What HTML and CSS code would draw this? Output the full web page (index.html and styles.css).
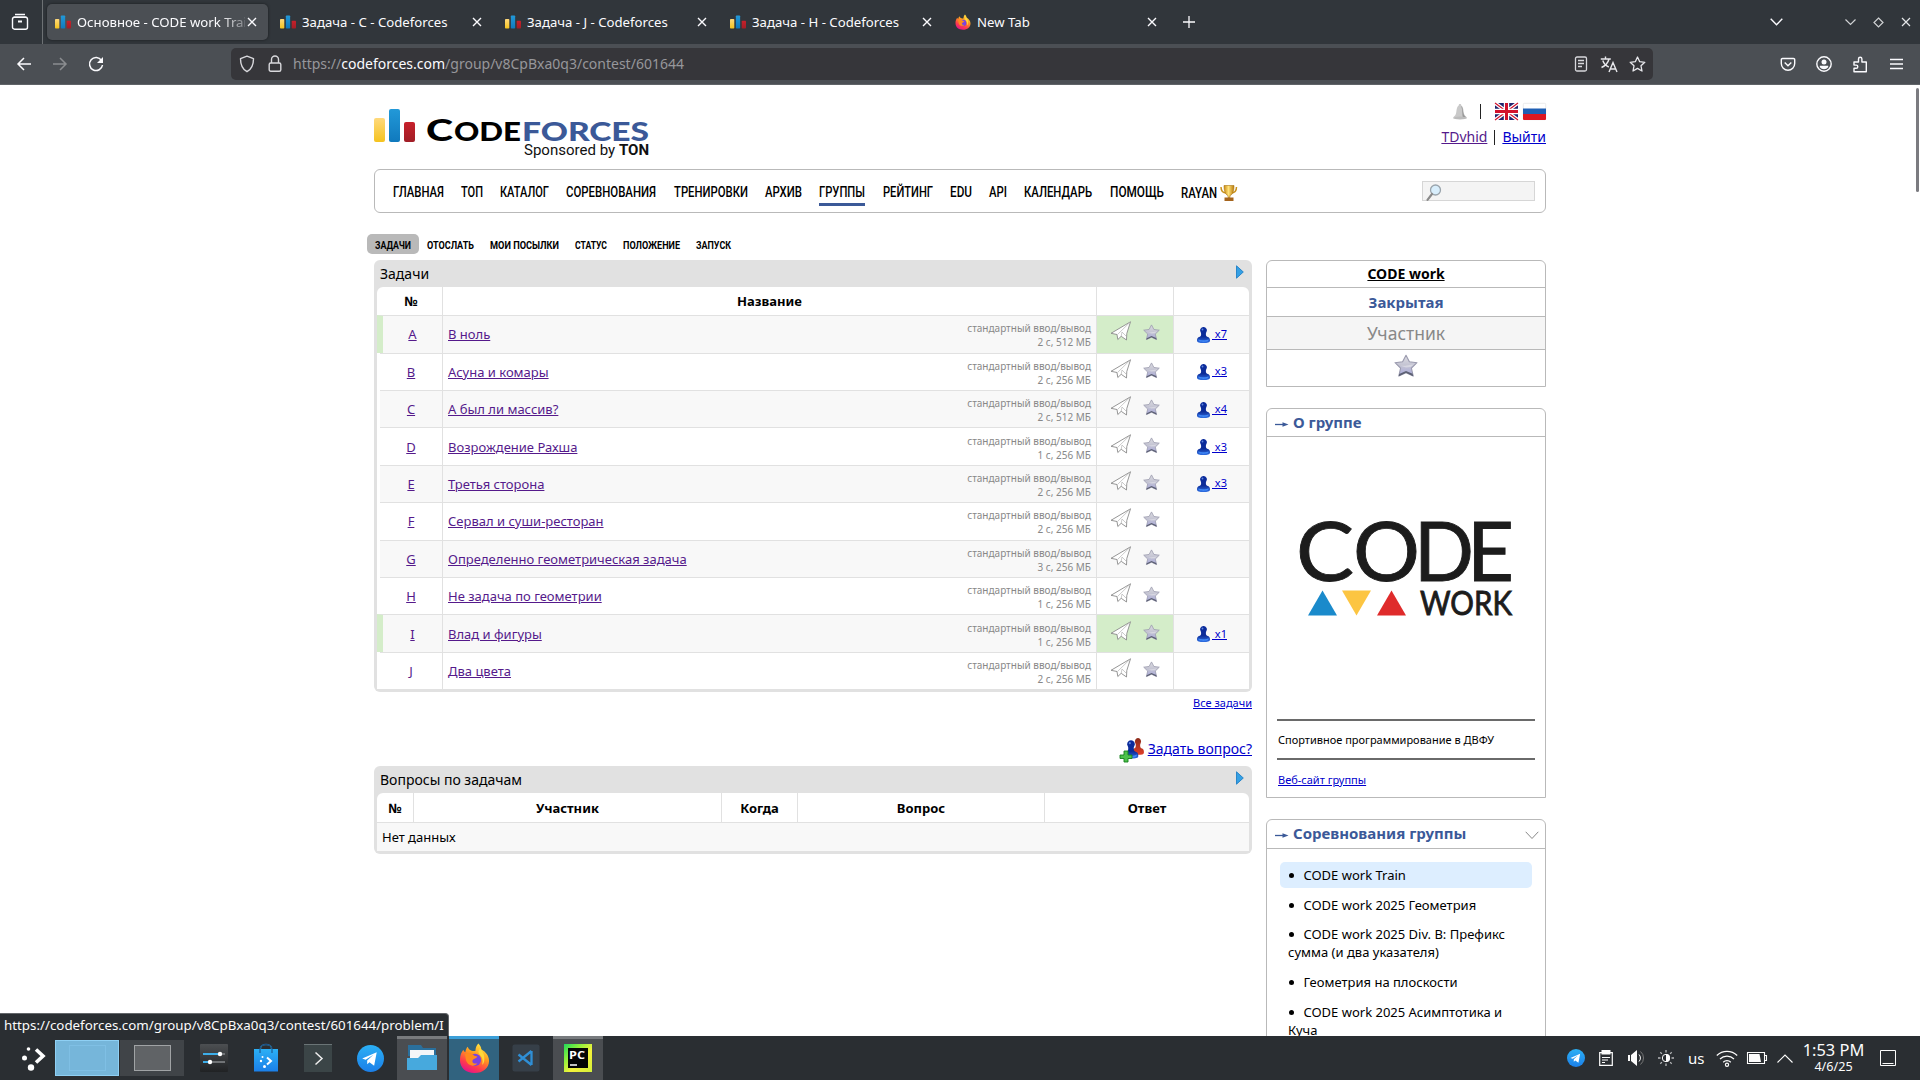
FILE: index.html
```html
<!DOCTYPE html>
<html lang="ru">
<head>
<meta charset="utf-8">
<title>Основное - CODE work Train - Codeforces</title>
<link rel="stylesheet" href="styles.css">
</head>
<body>
<svg class="defs" width="0" height="0" aria-hidden="true">
  <defs>
    <linearGradient id="g-yellow" x1="0" y1="0" x2="0" y2="1"><stop offset="0" stop-color="#ffd97c"/><stop offset="1" stop-color="#f5c31e"/></linearGradient>
    <linearGradient id="g-blue" x1="0" y1="0" x2="0" y2="1"><stop offset="0" stop-color="#2299d8"/><stop offset="1" stop-color="#1079bd"/></linearGradient>
    <linearGradient id="g-red" x1="0" y1="0" x2="0" y2="1"><stop offset="0" stop-color="#c8202b"/><stop offset="1" stop-color="#a01e26"/></linearGradient>
    <linearGradient id="g-star" x1="0" y1="0" x2="0" y2="1"><stop offset="0" stop-color="#dcdce2"/><stop offset=".5" stop-color="#c3c3d2"/><stop offset="1" stop-color="#a8a8dc"/></linearGradient>
    <linearGradient id="g-pawn" x1="0" y1="0" x2="0" y2="1"><stop offset="0" stop-color="#0a2a9c"/><stop offset=".6" stop-color="#0c2c98"/><stop offset="1" stop-color="#2f6fe2"/></linearGradient>
    <linearGradient id="g-pawn-red" x1="0" y1="0" x2="0" y2="1"><stop offset="0" stop-color="#8a2a18"/><stop offset="1" stop-color="#e0402a"/></linearGradient>
    <linearGradient id="g-fox" x1=".8" y1="0" x2=".3" y2="1"><stop offset="0" stop-color="#fff24a"/><stop offset=".4" stop-color="#ff9a1f"/><stop offset=".75" stop-color="#ff3a4c"/><stop offset="1" stop-color="#e3128c"/></linearGradient>
    <linearGradient id="g-tg" x1="0" y1="0" x2="0" y2="1"><stop offset="0" stop-color="#2bb0f5"/><stop offset="1" stop-color="#1b7fe8"/></linearGradient>
    <linearGradient id="g-dark" x1="0" y1="0" x2="0" y2="1"><stop offset="0" stop-color="#4c4f52"/><stop offset="1" stop-color="#202224"/></linearGradient>
    <linearGradient id="g-cup" x1="0" y1="0" x2="1" y2="0"><stop offset="0" stop-color="#c98a12"/><stop offset=".45" stop-color="#ffe27a"/><stop offset="1" stop-color="#b87808"/></linearGradient>
    <linearGradient id="g-pc" x1="0" y1="0" x2="1" y2="1"><stop offset="0" stop-color="#1fd95b"/><stop offset=".3" stop-color="#8bf03c"/><stop offset=".6" stop-color="#f5f23a"/><stop offset="1" stop-color="#d4f03a"/></linearGradient>
  </defs>
  <symbol id="bars" viewBox="0 0 41 33">
    <rect x="0" y="9" width="11" height="24" rx="2" fill="url(#g-yellow)"/>
    <rect x="15" y="0" width="11" height="33" rx="2" fill="url(#g-blue)"/>
    <rect x="30" y="13" width="11" height="20" rx="2" fill="url(#g-red)"/>
  </symbol>
  <symbol id="close" viewBox="0 0 10 10"><path d="M1 1l8 8M9 1l-8 8" fill="none" stroke="currentColor" stroke-width="1.4"/></symbol>
  <symbol id="firefox" viewBox="0 0 32 32">
    <path d="M20 1c2 2 3 4 3 6 5 3 8 7 8 12 0 7-6 12.500-15 12.500S1 26 1 18c0-5 1.500-8 3.500-10.500C5 9 5.500 9.500 6.500 10 7 7 8 5.500 9 4.500c.5 2 2 3.500 4 4 2 .5 3 .5 4 0 0-3 1-5.500 3-7.500z" fill="url(#g-fox)"/>
    <circle cx="16.500" cy="18" r="6.300" fill="#7a42e0"/>
    <path d="M6 12c4-2 7-1 9 1 1 1.200 2.500 1.300 4 1.500-1 2.500-4 2-5 4-1 2.200 2 4 5 3-2 3-8 3.500-10.500-.5C6.500 18 7 14 6 12z" fill="#ff8a1e"/>
    <path d="M22 6c3 4 5 8 4 13-.3 2-1 3-2 4 1-5 0-8-3-11-1.500-1.500-1-4 1-6z" fill="#ffd83a"/>
  </symbol>
  <symbol id="telegram" viewBox="0 0 26 26"><circle cx="13" cy="13" r="13" fill="url(#g-tg)"/><path d="M5 13l14-6-2.500 13-4.500-3.500-2.200 2v-3.600l6-5.400-7.500 4.600z" fill="#fff"/></symbol>
  <symbol id="star" viewBox="0 0 24 24"><path d="M12 1.300l3.400 6.400 7.600 1-5.600 5.500 1.800 7.800-7.200-3.300L4.800 22l1.800-7.800L1 8.700l7.600-1z" fill="url(#g-star)" stroke="#9a9aae" stroke-width="1.100" stroke-linejoin="round"/><path d="M4.800 22.300l7.200-3.500 7.200 3.500-.6-2.600-6.600-2.700-6.800 3z" fill="#5c6072"/><path d="M4 11c5 2 10 0 16-.5L16.500 13 12 13.500z" fill="#fff" opacity=".35"/></symbol>
  <symbol id="plane" viewBox="0 0 22 20"><path d="M20.500.8L1 12.300l6 1.200.8 5 3.400-3.200 5.300 3.700.3-6.500z" fill="#fff" stroke="#8a8a8a" stroke-width=".9" stroke-linejoin="round"/><path d="M20.500.8L7.500 13.500M12 11l-.8 4.300M12 11l4 4" fill="none" stroke="#b5b5b5" stroke-width=".7"/></symbol>
  <symbol id="pawn" viewBox="0 0 13 16"><path d="M6.500 0a3.300 3.300 0 0 1 2.900 5C8.800 6 8.800 7 9 8.300c.1.800.6 1.400 2 1.800 1.300.5 2 1.500 2 3.600 0 1.700-2.500 2.300-6.500 2.300S0 15.400 0 13.700c0-2.100.7-3.100 2-3.600 1.400-.4 1.900-1 2-1.800.2-1.300.2-2.300-.4-3.300A3.300 3.300 0 0 1 6.500 0z" fill="url(#g-pawn)"/><path d="M1.500 12.300c2 1.400 8 1.400 10 0 .5 2-1.200 2.600-5 2.600s-5.500-.6-5-2.600z" fill="#3f86f5"/><circle cx="5.500" cy="2.500" r=".9" fill="#5f85dc"/></symbol>
  <symbol id="tri" viewBox="0 0 8 14"><path d="M.5.8L7.300 7 .5 13.200z" fill="#35a0e4" stroke="#1f7fc6" stroke-width=".9"/></symbol>
  <symbol id="arrow" viewBox="0 0 14 7"><path d="M0 3.500h9" stroke="#3b5998" stroke-width="1.300"/><path d="M7.500 1.200l6 2.300-6 2.300z" fill="#3b5998"/></symbol>
</svg>

<header class="tabs">
  <div class="recent"><svg width="18" height="18" viewBox="0 0 18 18" fill="none" stroke="#fbfbfe" stroke-width="1.400"><path d="M4 1.500h10M2.500 4.200h13"/><rect x="1.500" y="4.200" width="15" height="12" rx="2"/><path d="M7 8.500h4" stroke-width="2"/></svg></div>
  <div class="tab active"><svg class="fav"><use href="#bars"/></svg><span class="ttl fade">Основное - CODE work Train</span><svg class="x"><use href="#close"/></svg></div>
  <div class="tab"><svg class="fav"><use href="#bars"/></svg><span class="ttl">Задача - C - Codeforces</span><svg class="x"><use href="#close"/></svg></div>
  <div class="tab"><svg class="fav"><use href="#bars"/></svg><span class="ttl">Задача - J - Codeforces</span><svg class="x"><use href="#close"/></svg></div>
  <div class="tab"><svg class="fav"><use href="#bars"/></svg><span class="ttl">Задача - H - Codeforces</span><svg class="x"><use href="#close"/></svg></div>
  <div class="tab"><svg class="fav"><use href="#firefox"/></svg><span class="ttl">New Tab</span><svg class="x"><use href="#close"/></svg></div>
  <svg class="plus" width="12" height="12" viewBox="0 0 12 12"><path d="M6 0v12M0 6h12" stroke="#fbfbfe" stroke-width="1.300"/></svg>
  <div class="wm">
    <svg width="13" height="8" viewBox="0 0 13 8"><path d="M.7.8l5.800 6 5.800-6" fill="none" stroke="#fbfbfe" stroke-width="1.400"/></svg>
    <svg class="m1" width="11" height="7" viewBox="0 0 11 7"><path d="M.5.5l5 5 5-5" fill="none" stroke="#d0d2d4" stroke-width="1.200"/></svg>
    <svg width="11" height="11" viewBox="0 0 11 11"><path d="M5.500 1l4.500 4.500-4.500 4.500L1 5.500z" fill="none" stroke="#d0d2d4" stroke-width="1.200"/></svg>
    <svg width="10" height="10" viewBox="0 0 10 10"><path d="M1 1l8 8M9 1l-8 8" stroke="#e4e6e8" stroke-width="1.200"/></svg>
  </div>
</header>

<nav class="toolbar">
  <div class="navbtns">
    <svg width="16" height="16" viewBox="0 0 16 16"><path d="M15 8H2M8 2L2 8l6 6" fill="none" stroke="#fbfbfe" stroke-width="1.500"/></svg>
    <svg width="16" height="16" viewBox="0 0 16 16"><path d="M1 8h13M8 2l6 6-6 6" fill="none" stroke="#8b8d90" stroke-width="1.500"/></svg>
    <svg width="16" height="16" viewBox="0 0 16 16"><path d="M13.500 4.500A6.500 6.500 0 1 0 14.500 9" fill="none" stroke="#fbfbfe" stroke-width="1.500"/><path d="M15 1v6H9z" fill="#fbfbfe"/></svg>
  </div>
  <div class="url">
    <svg width="16" height="18" viewBox="0 0 16 18"><path d="M8 1.200l6.500 2.500c0 6-2 10.500-6.500 13-4.500-2.500-6.500-7-6.500-13z" fill="none" stroke="#d8d8dc" stroke-width="1.400" stroke-linejoin="round"/></svg>
    <svg width="14" height="18" viewBox="0 0 14 18"><rect x="1.200" y="8" width="11.600" height="8.300" rx="1.500" fill="none" stroke="#d8d8dc" stroke-width="1.400"/><path d="M3.500 8V4.500a3.500 3.500 0 0 1 7 0V8" fill="none" stroke="#d8d8dc" stroke-width="1.400"/></svg>
    <span class="addr">https://<b>codeforces.com</b>/group/v8CpBxa0q3/contest/601644</span>
    <div class="acts">
    <svg width="16" height="16" viewBox="0 0 16 16" fill="none" stroke="#d8d8dc" stroke-width="1.300"><rect x="2.500" y="1" width="11" height="14" rx="1.500"/><path d="M5 4.500h6M5 7.500h6M5 10.500h4"/></svg>
    <svg width="18" height="17" viewBox="0 0 18 17" fill="none" stroke="#e8e8ec" stroke-width="1.400"><path d="M.8 3h10M5.500.5V3M9 3C8 7 5 10 1.500 11.500M2.800 4.500c1 3 3.500 5.500 6 6.500M9 16l4-9.500L17 16M10.300 13h5.400"/></svg>
    <svg width="17" height="16" viewBox="0 0 17 16"><path d="M8.500 1l2.200 4.700 5.100.6-3.800 3.500 1 5.200-4.500-2.600L4 15l1-5.200L1.200 6.300l5.100-.6z" fill="none" stroke="#e8e8ec" stroke-width="1.300" stroke-linejoin="round"/></svg>
    </div>
  </div>
  <div class="tools">
    <svg width="16" height="16" viewBox="0 0 16 16" fill="none" stroke="#fbfbfe" stroke-width="1.400"><path d="M2.500 2.500h11a1.200 1.200 0 0 1 1.200 1.200V7.500a6.700 6.700 0 0 1-13.400 0V3.700A1.200 1.200 0 0 1 2.500 2.500zM4.700 6.500L8 9.700l3.300-3.200"/></svg>
    <svg width="16" height="16" viewBox="0 0 16 16"><circle cx="8" cy="8" r="7.200" fill="none" stroke="#fbfbfe" stroke-width="1.400"/><circle cx="8" cy="6" r="2.500" fill="#fbfbfe"/><path d="M3.800 9.700h8.400v1.600a5.500 5.500 0 0 1-8.400 0z" fill="#fbfbfe"/></svg>
    <svg width="16" height="17" viewBox="0 0 16 17"><path d="M2 6h4.500V3a1.700 1.700 0 0 1 3.400 0v3h4.400v9.800H2v-3.500h2.200a1.600 1.600 0 0 0 0-3.200H2z" fill="none" stroke="#fbfbfe" stroke-width="1.400" stroke-linejoin="round"/></svg>
    <svg class="burger" width="13" height="12" viewBox="0 0 13 12"><path d="M0 1.500h13M0 6h13M0 10.500h13" stroke="#fbfbfe" stroke-width="1.300"/></svg>
  </div>
</nav>

<main class="page">
  <div class="wrap">
    <div class="head">
      <svg class="logo" width="280" height="52" viewBox="0 0 280 52">
        <use href="#bars" width="41" height="33"/>
        <text class="cf" y="32"><tspan x="52" font-size="31" textLength="27" lengthAdjust="spacingAndGlyphs">C</tspan><tspan x="80" font-size="26" textLength="67" lengthAdjust="spacingAndGlyphs">ODE</tspan><tspan x="148" font-size="26" fill="#3b5998" textLength="127" lengthAdjust="spacingAndGlyphs">FORCES</tspan></text>
        <text class="ton" x="150" y="46" textLength="125" lengthAdjust="spacingAndGlyphs">Sponsored by <tspan font-weight="700">TON</tspan></text>
      </svg>
      <div class="user">
        <div class="flags">
          <svg width="16" height="16" viewBox="0 0 16 16"><path d="M8 0c1 0 1.300.7 1.300 1.500C11 2.500 11.300 5 11.700 8c.3 2.500 1.300 4 3.300 5.500H1C3 12 4 10.500 4.300 8c.4-3 .7-5.500 2.400-6.500C6.700.7 7 0 8 0z" fill="#c9c9c9"/><path d="M9 2c1.500 2 1.200 8 1.800 11.500h3.700C12 12 11.500 10 11 7.500 10.800 5 10.500 2.500 9 2z" fill="#989898"/><ellipse cx="8" cy="14" rx="7" ry="1.500" fill="#bcbcbc"/></svg>
          <i class="sep"></i>
          <svg width="23" height="17" viewBox="0 0 23 17"><rect width="23" height="17" rx="1" fill="#20246c"/><path d="M0 0l23 17M23 0L0 17" stroke="#fff" stroke-width="3.600"/><path d="M0 0l23 17M23 0L0 17" stroke="#d2112b" stroke-width="1.200"/><path d="M11.500 0v17M0 8.500h23" stroke="#fff" stroke-width="5.400"/><path d="M11.500 0v17M0 8.500h23" stroke="#d2112b" stroke-width="3"/></svg>
          <svg width="23" height="17" viewBox="0 0 23 17"><rect x=".3" y=".3" width="22.400" height="16.400" rx="1" fill="#fff" stroke="#ddd" stroke-width=".6"/><path d="M0 5.500h23v6H0z" fill="#1f5fb4"/><path d="M0 11h23v5a1 1 0 0 1-1 1H1a1 1 0 0 1-1-1z" fill="#dc1722"/></svg>
        </div>
        <div class="login"><a class="v" href="#">TDvhid</a><i class="sep"></i><a href="#">Выйти</a></div>
      </div>
    </div>

    <nav class="menu">
      <svg width="51" height="36"><text y="23" textLength="51" lengthAdjust="spacingAndGlyphs">ГЛАВНАЯ</text></svg>
      <svg width="22" height="36"><text y="23" textLength="22" lengthAdjust="spacingAndGlyphs">ТОП</text></svg>
      <svg width="49" height="36"><text y="23" textLength="49" lengthAdjust="spacingAndGlyphs">КАТАЛОГ</text></svg>
      <svg width="90" height="36"><text y="23" textLength="90" lengthAdjust="spacingAndGlyphs">СОРЕВНОВАНИЯ</text></svg>
      <svg width="74" height="36"><text y="23" textLength="74" lengthAdjust="spacingAndGlyphs">ТРЕНИРОВКИ</text></svg>
      <svg width="37" height="36"><text y="23" textLength="37" lengthAdjust="spacingAndGlyphs">АРХИВ</text></svg>
      <svg width="46" height="36"><text y="23" textLength="46" lengthAdjust="spacingAndGlyphs">ГРУППЫ</text><rect y="29" width="46" height="3" fill="#3b5998"/></svg>
      <svg width="50" height="36"><text y="23" textLength="50" lengthAdjust="spacingAndGlyphs">РЕЙТИНГ</text></svg>
      <svg width="22" height="36"><text y="23" textLength="22" lengthAdjust="spacingAndGlyphs">EDU</text></svg>
      <svg width="18" height="36"><text y="23" textLength="18" lengthAdjust="spacingAndGlyphs">API</text></svg>
      <svg width="68" height="36"><text y="23" textLength="68" lengthAdjust="spacingAndGlyphs">КАЛЕНДАРЬ</text></svg>
      <svg width="54" height="36"><text y="23" textLength="54" lengthAdjust="spacingAndGlyphs">ПОМОЩЬ</text></svg>
      <svg width="57" height="36"><text y="24" textLength="36" lengthAdjust="spacingAndGlyphs">RAYAN</text>
        <path d="M40 13c0 5 3 6 5.500 6M55.500 13c0 5-3 6-5.500 6" fill="none" stroke="#c8901c" stroke-width="1.500"/><path d="M43 11.500h10c0 5-1 9-4 10v2h-2v-2c-3-1-4-5-4-10z" fill="url(#g-cup)" stroke="#a9740f" stroke-width=".6"/><path d="M43.500 23.500h9V27h-9z" fill="#a5641c"/></svg>
      <div class="search"><svg width="16" height="17" viewBox="0 0 16 17"><circle cx="9.500" cy="6" r="5" fill="#d8eefc" stroke="#9aa4ac" stroke-width="1.300"/><path d="M6 10L1.500 15.800" stroke="#8a8a8a" stroke-width="2.200" stroke-linecap="round"/></svg></div>
    </nav>

    <nav class="sub">
      <span class="on"><svg width="36" height="20"><text y="15" textLength="36" lengthAdjust="spacingAndGlyphs">ЗАДАЧИ</text></svg></span>
      <span><svg width="47" height="20"><text y="15" textLength="47" lengthAdjust="spacingAndGlyphs">ОТОСЛАТЬ</text></svg></span>
      <span><svg width="69" height="20"><text y="15" textLength="69" lengthAdjust="spacingAndGlyphs">МОИ ПОСЫЛКИ</text></svg></span>
      <span><svg width="32" height="20"><text y="15" textLength="32" lengthAdjust="spacingAndGlyphs">СТАТУС</text></svg></span>
      <span><svg width="57" height="20"><text y="15" textLength="57" lengthAdjust="spacingAndGlyphs">ПОЛОЖЕНИЕ</text></svg></span>
      <span><svg width="35" height="20"><text y="15" textLength="35" lengthAdjust="spacingAndGlyphs">ЗАПУСК</text></svg></span>
    </nav>

    <div class="cols">
      <section class="left">
        <div class="dt">
          <div class="cap">Задачи<svg class="tri"><use href="#tri"/></svg></div>
          <div class="grid">
            <div class="r th"><div>№</div><div>Название</div><div></div><div></div></div>
            <div class="r t odd ok"><div class="n"><a class="v" href="#">A</a></div><div class="p"><a class="v" href="#">В ноль</a><small>стандартный ввод/вывод<br>2 с, 512 МБ</small></div><div class="a"><svg class="pl"><use href="#plane"/></svg><svg class="st"><use href="#star"/></svg></div><div class="c"><svg class="pw"><use href="#pawn"/></svg><a href="#">&nbsp;x7</a></div></div>
            <div class="r"><div class="n"><a class="v" href="#">B</a></div><div class="p"><a class="v" href="#">Асуна и комары</a><small>стандартный ввод/вывод<br>2 с, 256 МБ</small></div><div class="a"><svg class="pl"><use href="#plane"/></svg><svg class="st"><use href="#star"/></svg></div><div class="c up"><svg class="pw"><use href="#pawn"/></svg><a href="#">&nbsp;x3</a></div></div>
            <div class="r odd"><div class="n"><a class="v" href="#">C</a></div><div class="p"><a class="v" href="#">А был ли массив?</a><small>стандартный ввод/вывод<br>2 с, 512 МБ</small></div><div class="a"><svg class="pl"><use href="#plane"/></svg><svg class="st"><use href="#star"/></svg></div><div class="c"><svg class="pw"><use href="#pawn"/></svg><a href="#">&nbsp;x4</a></div></div>
            <div class="r t low"><div class="n"><a class="v" href="#">D</a></div><div class="p"><a class="v" href="#">Возрождение Рахша</a><small>стандартный ввод/вывод<br>1 с, 256 МБ</small></div><div class="a"><svg class="pl"><use href="#plane"/></svg><svg class="st"><use href="#star"/></svg></div><div class="c"><svg class="pw"><use href="#pawn"/></svg><a href="#">&nbsp;x3</a></div></div>
            <div class="r odd"><div class="n"><a class="v" href="#">E</a></div><div class="p"><a class="v" href="#">Третья сторона</a><small>стандартный ввод/вывод<br>2 с, 256 МБ</small></div><div class="a"><svg class="pl"><use href="#plane"/></svg><svg class="st"><use href="#star"/></svg></div><div class="c up"><svg class="pw"><use href="#pawn"/></svg><a href="#">&nbsp;x3</a></div></div>
            <div class="r t"><div class="n"><a class="v" href="#">F</a></div><div class="p"><a class="v" href="#">Сервал и суши-ресторан</a><small>стандартный ввод/вывод<br>2 с, 256 МБ</small></div><div class="a"><svg class="pl"><use href="#plane"/></svg><svg class="st"><use href="#star"/></svg></div><div class="c"></div></div>
            <div class="r odd"><div class="n"><a class="v" href="#">G</a></div><div class="p"><a class="v" href="#">Определенно геометрическая задача</a><small>стандартный ввод/вывод<br>3 с, 256 МБ</small></div><div class="a"><svg class="pl"><use href="#plane"/></svg><svg class="st"><use href="#star"/></svg></div><div class="c"></div></div>
            <div class="r"><div class="n"><a class="v" href="#">H</a></div><div class="p"><a class="v" href="#">Не задача по геометрии</a><small>стандартный ввод/вывод<br>1 с, 256 МБ</small></div><div class="a"><svg class="pl"><use href="#plane"/></svg><svg class="st"><use href="#star"/></svg></div><div class="c"></div></div>
            <div class="r t low odd ok"><div class="n"><a class="v" href="#">I</a></div><div class="p"><a class="v" href="#">Влад и фигуры</a><small>стандартный ввод/вывод<br>1 с, 256 МБ</small></div><div class="a"><svg class="pl"><use href="#plane"/></svg><svg class="st"><use href="#star"/></svg></div><div class="c"><svg class="pw"><use href="#pawn"/></svg><a href="#">&nbsp;x1</a></div></div>
            <div class="r"><div class="n"><a class="v plain" href="#">J</a></div><div class="p"><a class="v" href="#">Два цвета</a><small>стандартный ввод/вывод<br>2 с, 256 МБ</small></div><div class="a"><svg class="pl"><use href="#plane"/></svg><svg class="st"><use href="#star"/></svg></div><div class="c"></div></div>
          </div>
        </div>
        <div class="all"><a href="#">Все задачи</a></div>
        <div class="ask">
          <svg width="24" height="24" viewBox="0 0 24 24"><g transform="translate(12 0) scale(.92 1.050)"><path d="M6.500 0a3.300 3.300 0 0 1 2.900 5C8.800 6 8.800 7 9 8.300c.1.800.6 1.400 2 1.800 1.300.5 2 1.500 2 3.600 0 1.700-2.500 2.300-6.500 2.300S0 15.400 0 13.700c0-2.100.7-3.100 2-3.600 1.400-.4 1.900-1 2-1.800.2-1.300.2-2.300-.4-3.300A3.300 3.300 0 0 1 6.500 0z" fill="url(#g-pawn-red)"/></g><use href="#pawn" x="3.500" y="2" width="15" height="19"/><path d="M4 13h4v4h4v3.500H8v3.500H4v-3.500H0V17h4z" fill="#4cc04a" stroke="#15801c" stroke-width=".9"/></svg>
          <a href="#">Задать вопрос?</a>
        </div>
        <div class="dt q">
          <div class="cap">Вопросы по задачам<svg class="tri"><use href="#tri"/></svg></div>
          <div class="grid">
            <div class="r th"><div>№</div><div>Участник</div><div>Когда</div><div>Вопрос</div><div>Ответ</div></div>
            <div class="none">Нет данных</div>
          </div>
        </div>
      </section>

      <aside class="right">
        <div class="box info">
          <div class="i1"><a href="#">CODE work</a></div>
          <div class="i2">Закрытая</div>
          <div class="i3">Участник</div>
          <div class="i4"><svg width="24" height="24"><use href="#star"/></svg></div>
        </div>
        <div class="box about">
          <div class="bh"><svg class="arr"><use href="#arrow"/></svg>О группе</div>
          <svg class="cw" width="258" height="282" viewBox="0 0 258 282">
            <g class="cwt"><text y="143.500" font-size="81"><tspan x="19" textLength="58" lengthAdjust="spacingAndGlyphs">C</tspan><tspan x="76" textLength="67" lengthAdjust="spacingAndGlyphs">O</tspan><tspan x="137" textLength="60" lengthAdjust="spacingAndGlyphs">D</tspan><tspan x="190" textLength="47" lengthAdjust="spacingAndGlyphs">E</tspan></text>
            <text x="143" y="177.500" font-size="33" textLength="92" lengthAdjust="spacingAndGlyphs">WORK</text></g>
            <path d="M31 178.500l14.500-25 14.500 25z" fill="#1a8acb"/><path d="M65 153.500h29l-14.500 25z" fill="#fcc542"/><path d="M100 178.500l14.500-25 14.500 25z" fill="#df2b2b"/>
          </svg>
          <hr><p>Спортивное программирование в ДВФУ</p><hr>
          <p><a href="#">Веб-сайт группы</a></p>
        </div>
        <div class="box list">
          <div class="bh"><svg class="arr"><use href="#arrow"/></svg>Соревнования группы<svg class="chev" width="14" height="9" viewBox="0 0 14 9"><path d="M.7.8L7 7.500 13.300.8" fill="none" stroke="#888" stroke-width="1"/></svg></div>
          <ul>
            <li class="cur">CODE work Train</li>
            <li class="tight">CODE work 2025 Геометрия</li>
            <li>CODE work 2025 Div. B: Префикс сумма (и два указателя)</li>
            <li>Геометрия на плоскости</li>
            <li>CODE work 2025 Асимптотика и Куча</li>
          </ul>
        </div>
      </aside>
    </div>
  </div>
  <div class="scroll"></div>
  <div class="status">https://codeforces.com/group/v8CpBxa0q3/contest/601644/problem/I</div>
</main>

<footer class="bar">
  <div class="slot launch"><svg width="24" height="26" viewBox="0 0 24 26"><circle cx="6.500" cy="3" r="1.800" fill="#fff"/><circle cx="2.500" cy="12" r="2.500" fill="#fff"/><circle cx="9" cy="21.500" r="3.200" fill="#fff"/><path d="M14 3.500l7 6.500-7 6.500" fill="none" stroke="#fff" stroke-width="3.600"/></svg></div>
  <div class="pager"><div class="d1"><i></i></div><div class="d2"><i></i></div></div>
  <div class="slot"><svg width="28" height="28" viewBox="0 0 28 28"><rect width="28" height="28" rx="1" fill="url(#g-dark)"/><path d="M3 10h17M3 18h7" stroke="#3daee9" stroke-width="2"/><path d="M20 10h5M10 18h15" stroke="#707376" stroke-width="2"/><circle cx="20" cy="10" r="2.200" fill="#fff"/><circle cx="10" cy="18" r="2.200" fill="#fff"/></svg></div>
  <div class="slot"><svg width="26" height="28" viewBox="0 0 26 28"><path d="M7.500 10V4.500a5.500 4 0 0 1 11 0V10" fill="none" stroke="#2e7fa8" stroke-width="1.500"/><path d="M1 5h24v22.500H1z" fill="url(#g-tg)"/><path d="M7 9V4.500a6 4 0 0 1 12 0V9" fill="none" stroke="#1a4a80" stroke-width="1"/><circle cx="9.500" cy="13" r="1" fill="#fff"/><circle cx="8" cy="17" r="1.200" fill="#fff"/><circle cx="11.500" cy="22.500" r="1.500" fill="#fff"/><path d="M14 13.500l4 3.500-4 3.500" fill="none" stroke="#fff" stroke-width="2"/></svg></div>
  <div class="slot"><svg width="28" height="28" viewBox="0 0 28 28"><path d="M0 0h28v28H0z" fill="#3b4547"/><path d="M0 .5h28" stroke="#6a7476"/><path d="M11.500 8.500l6.500 6-6.500 6" fill="none" stroke="#eee" stroke-width="1.500"/></svg></div>
  <div class="slot"><svg width="27" height="27"><use href="#telegram"/></svg></div>
  <div class="slot open"><svg width="30" height="28" viewBox="0 0 30 28"><path d="M1 1h13l2 3h13v8H1z" fill="#2a6f9c"/><path d="M3 6h24v10H3z" fill="#f4f6f8"/><path d="M0 14h11l3-3h16v15H0z" fill="#47a9dd"/></svg></div>
  <div class="slot front"><svg width="31" height="32"><use href="#firefox"/></svg></div>
  <div class="slot"><svg width="28" height="28" viewBox="0 0 28 28"><rect x=".5" y=".5" width="27" height="27" rx="2" fill="#363f48"/><path d="M19.500 7v14M6.500 10.500L19.500 21M6.500 17.500L19.500 7" fill="none" stroke="#2f8fd6" stroke-width="2.300"/></svg></div>
  <div class="slot open pc"><svg width="28" height="28" viewBox="0 0 28 28"><rect width="28" height="28" fill="url(#g-pc)"/><path d="M4 4h20v20H4z" fill="#050505"/><text x="5" y="14.500" textLength="16" lengthAdjust="spacingAndGlyphs">PC</text><path d="M6 21h7" stroke="#fff" stroke-width="1.500"/></svg></div>
  <div class="tray">
    <svg width="18" height="18"><use href="#telegram"/></svg>
    <svg class="t2" width="14" height="16" viewBox="0 0 14 16"><path d="M.7 2.700h12.600v12.600H.7z" fill="none" stroke="#fcfcfc" stroke-width="1.200"/><path d="M2.500 0h9v4.500h-9z" fill="#fcfcfc"/><path d="M3 7.500h8M3 10h6M3 12.500h3" stroke="#fcfcfc"/></svg>
    <svg class="t3" width="18" height="16" viewBox="0 0 18 16"><path d="M0 5h2v6H0zM3 5l6-5v16L3 11z" fill="#fcfcfc"/><path d="M11 4.500a5 5 0 0 1 0 7" fill="none" stroke="#fcfcfc"/><path d="M12.500 1.500a8.500 8.500 0 0 1 0 13" fill="none" stroke="#777"/></svg>
    <svg class="t4" width="16" height="16" viewBox="0 0 16 16"><circle cx="8" cy="8" r="3.700" fill="none" stroke="#fcfcfc"/><path d="M8 4a4 4 0 0 1 0 8z" fill="#fcfcfc"/><path d="M8 0v2.500M8 13.500V16M0 8h2.500M13.500 8H16M2.300 2.300l1.600 1.600M12.100 12.100l1.600 1.600M2.300 13.700l1.600-1.600M12.100 3.900l1.600-1.600" stroke="#b5b7b9" stroke-width="1.300"/></svg>
    <span class="us">us</span>
    <svg class="t5" width="22" height="17" viewBox="0 0 22 17" fill="none" stroke="#fcfcfc" stroke-width="1.200"><path d="M.8 5.500a14.500 14.500 0 0 1 20.400 0M4 9a10 10 0 0 1 14 0M7.200 12.200a5.500 5.500 0 0 1 7.600 0"/><circle cx="11" cy="14.700" r="1.600"/></svg>
    <svg class="t6" width="20" height="12" viewBox="0 0 20 12"><path d="M.5.500h17v11H.5zM18 3.500h1.500v5H18" fill="none" stroke="#fcfcfc" stroke-width="1.100"/><path d="M2 2h10.500l1.500 8H2z" fill="#fcfcfc"/></svg>
    <svg class="t7" width="16" height="9" viewBox="0 0 16 9"><path d="M.5 8.500L8 1l7.500 7.500" fill="none" stroke="#fcfcfc" stroke-width="1.100"/></svg>
    <div class="clock"><b>1:53 PM</b><span>4/6/25</span></div>
    <svg class="t8" width="16" height="16" viewBox="0 0 16 16"><path d="M.5.500h15v15H.5zM2.500 13.500h11" fill="none" stroke="#fcfcfc"/></svg>
  </div>
</footer>
</body>
</html>
```
FILE: styles.css
```css
* { box-sizing: border-box; }
html, body { margin: 0; height: 100%; }
body {
  display: flex; flex-direction: column; height: 1080px; overflow: hidden;
  font-family: "Noto Sans", sans-serif; font-size: 13px; color: #000; background: #fff;
}
svg { display: block; flex: none; overflow: visible; }
.defs { position: absolute; }
a { color: #0000cc; text-decoration: underline; }
a.v { color: #551a8b; }

/* Browser tab strip */
.tabs { flex: none; height: 44px; display: flex; align-items: center; background: #31363b; color: #fbfbfe; }
.recent { width: 43px; height: 44px; border-right: 1px solid #6d7174; display: flex; align-items: center; padding-left: 11px; }
.tab { width: 221px; height: 36px; margin-left: 4px; padding: 0 11px 0 8px; border-radius: 5px; display: flex; align-items: center; }
.tab.active { background: #4b4f54; box-shadow: 0 0 3px rgba(0,0,0,.5); }
.fav { width: 16px; height: 16px; margin-right: 6px; }
.ttl { flex: 1; font-size: 13.200px; line-height: 20px; white-space: nowrap; overflow: hidden; }
.fade { -webkit-mask-image: linear-gradient(90deg, #000 85%, rgba(0,0,0,.3)); mask-image: linear-gradient(90deg, #000 85%, rgba(0,0,0,.3)); }
.x { width: 10px; height: 10px; margin-left: 2px; color: #fbfbfe; }
.plus { margin-left: 15px; }
.wm { margin-left: auto; display: flex; align-items: center; padding-right: 9px; gap: 17px; }
.m1 { margin-left: 45px; }

/* Navigation toolbar */
.toolbar { flex: none; height: 41px; display: flex; align-items: center; background: #4b4f54; border-bottom: 1px solid #606468; }
.navbtns { width: 231px; display: flex; gap: 20px; padding-left: 16px; }
.url { width: 1422px; height: 32px; border-radius: 5px; background: #36363a; display: flex; align-items: center; padding: 0 7px 0 8px; gap: 12px; }
.url > svg:nth-child(2) { margin-left: 1px; }
.acts { display: flex; align-items: center; gap: 11px; }
.addr { flex: 1; margin-left: -1px; font-size: 14px; line-height: 22px; color: #97979b; }
.addr b { font-weight: 400; color: #fbfbfe; }
.tools { flex: 1; display: flex; align-items: center; justify-content: flex-end; gap: 20px; padding-right: 17px; }
.burger { margin-left: 2px; }

/* Site */
.page { flex: 1; min-height: 0; position: relative; overflow: hidden; }
.wrap { width: 1172px; margin: 0 auto; }
.head { height: 84px; display: flex; justify-content: space-between; }
.logo { margin-top: 24px; }
.cf { font-family: Lato, sans-serif; font-weight: 900; }
.ton { font-family: Roboto, sans-serif; font-size: 14.500px; fill: #111; }
.user { padding-top: 18px; display: flex; flex-direction: column; align-items: flex-end; }
.flags { display: flex; align-items: center; gap: 5px; }
.flags .sep { margin: 0 9px 0 7px; }
.sep { width: 1px; height: 15px; background: #222; }
.login { display: flex; align-items: center; font-size: 14px; line-height: 20px; margin-top: 7px; }
.login .sep { margin: 0 7px; }
.menu { height: 44px; border: 1px solid #b9b9b9; border-radius: 6px; display: flex; gap: 17.300px; padding: 4px 10px 0 17.500px; }
.menu text { font: 500 15.500px Roboto, sans-serif; }
.search { width: 113px; height: 20px; margin: 7px 0 0 auto; background: #f4f4f4; border: 1px solid #d6d6d6; padding: 2px 3px; }
.sub { display: flex; margin: 21px 0 6px -7px; }
.sub span { height: 20px; padding: 0 8px; border-radius: 5px; }
.sub .on { background: #b9b9b9; }
.sub text { font: 700 11.300px Roboto, sans-serif; }
.cols { display: flex; gap: 14px; align-items: flex-start; }
.left { width: 878px; }
.right { width: 280px; }

.dt { background: #e1e1e1; border-radius: 6px; padding: 0 3px 3px; }
.cap { height: 27px; display: flex; justify-content: space-between; padding: 0 5px 0 3px; font-size: 14px; line-height: 27px; }
.tri { width: 8px; height: 14px; margin-top: 5px; }
.grid { background: #fff; border-radius: 6px 6px 0 0; }
.r { height: 37px; display: grid; grid-template-columns: 65px 654px 77px 76px; }
.r.t { height: 38px; }
.r.th { height: 28px; line-height: 28px; font-weight: 700; text-align: center; }
.r > div { border-top: 1px solid #e1e1e1; border-left: 1px solid #e1e1e1; padding-bottom: 0; }
.r.t > div { padding-bottom: 1px; }
.r.low > div { padding-top: 1px; padding-bottom: 0; }
.r.th > div { border-top: 0; }
.r > div:first-child { border-left: 0; }
.r.th > div:first-child { padding-left: 3px; }
.r > .n { margin-left: 3px; display: flex; align-items: center; justify-content: center; }
.r.ok > .n { margin-left: 0; border-left: 6px solid #d4edc9; }
.odd > div { background: #f8f8f8; }
.odd.ok > .a { background: #d4edc9; }
.plain { text-decoration: none; }
.p { display: flex; align-items: center; justify-content: space-between; padding: 0 5px; }
.p small { font-size: 10px; line-height: 14px; color: #888; text-align: right; padding-top: 1px; }
.a { display: flex; justify-content: space-between; padding: 0 13px; }
.pl { width: 22px; height: 20px; margin-top: 5px; }
.st { width: 17px; height: 17px; margin-top: 8px; }
.c { display: flex; padding: 0 0 0 23px; font-size: 11px; }
.pw { width: 13px; height: 16px; margin: 11px 2px 0 0; }
.c a { height: 36px; line-height: 36px; }
.up .pw { margin-top: 10px; }
.up a { line-height: 34px; }
.low .pw, .low .c a { margin-top: 0; }
.low .pw { margin-top: 10px; }
.all { text-align: right; font-size: 11px; line-height: 22px; height: 46px; }
.ask { display: flex; justify-content: flex-end; align-items: center; gap: 4px; height: 28px; padding-bottom: 5px; font-size: 14px; line-height: 20px; }
.ask a { position: relative; top: -1px; }
.q .r { height: 29px; line-height: 30px; grid-template-columns: 36px 308px 76px 247px 205px; }
.q .r.th > div:first-child { padding-left: 0; }
.none { height: 29px; border-top: 1px solid #e1e1e1; background: #f8f8f8; line-height: 29px; padding-left: 5px; }

/* Sidebar */
.box { border: 1px solid #b9b9b9; border-radius: 6px 6px 0 0; margin-bottom: 21px; }
.info { text-align: center; }
.info > div + div { border-top: 1px solid #b9b9b9; }
.i1 { height: 26px; line-height: 25px; font-size: 14px; font-weight: 700; }
.i1 a { color: #000; }
.i2 { height: 29px; line-height: 29px; font-size: 15px; font-weight: 700; color: #3b5998; }
.i3 { height: 33px; line-height: 32px; font-size: 17.500px; color: #888; background: #f5f5f5; }
.i4 { height: 37px; display: flex; justify-content: center; padding-top: 4px; }
.bh { height: 28px; display: flex; align-items: center; padding: 0 0 2px 8px; border-bottom: 1px solid #b9b9b9; font-size: 15px; font-weight: 700; color: #3b5998; }
.arr { width: 14px; height: 7px; margin: 5px 4px 0 0; }
.about { height: 390px; }
.cw { margin-left: 10px; }
.cwt { font-family: Lato, sans-serif; font-weight: 400; fill: #1c1c1c; stroke: #1c1c1c; stroke-width: .9px; }
.about hr { height: 2px; border: 0; background: #6a6a6a; margin: 0 10px; }
.about p { margin: 0 11px; font-size: 11px; line-height: 37px; height: 37px; }
.about p + hr + p { line-height: 39px; }
.list { height: 260px; margin: 0; }
.list .bh { height: 29px; }
.chev { margin: 4px 6px 0 auto; }
ul { margin: 13px 13px 0; padding: 0; list-style: none; font-size: 13px; line-height: 18px; }
li { padding: 4px 12px 4px 8px; margin-bottom: 4px; border-radius: 5px; }
li.tight { margin-bottom: 3px; }
li::before { content: ""; display: inline-block; width: 5px; height: 5px; border-radius: 50%; background: #000; margin: 0 9.500px 2px 1px; }
li.cur { background: #ddeeff; }
.scroll { position: absolute; right: 1px; top: 3px; width: 3px; height: 104px; border-radius: 2px; background: #7b7b80; }
.status { position: absolute; left: 0; bottom: 0; width: 449px; height: 23px; padding-left: 4px; background: #2a2e32; border: solid #63666a; border-width: 1px 1px 0 0; border-radius: 0 4px 0 0; color: #fcfcfc; font-size: 13.330px; line-height: 23px; white-space: nowrap; }

/* Desktop panel */
.bar { flex: none; height: 44px; display: flex; background: #2a2e32; color: #fcfcfc; }
.slot { width: 50px; margin-right: 2px; display: flex; align-items: center; justify-content: center; }
.launch { width: 55px; margin: 0; padding: 2px 0 0 12px; }
.pager { display: flex; gap: 1px; padding: 4px 0; margin-right: 5px; }
.pager div { width: 64px; display: flex; align-items: center; justify-content: center; }
.pager i { width: 37px; height: 26px; border: 1px solid #7fbfe4; }
.d1 { background: #76b6da; border: 1px solid #8fd0f4; }
.d2 { background: #404448; }
.pager .d2 i { background: #606366; border-color: #a0a3a5; }
.open { background: #4a4d51; box-shadow: inset 0 3px #787b7e; }
.front { background: #31637f; box-shadow: inset 0 3px #3b9fd8; }
.pc text { font: 700 11px "Open Sans", sans-serif; fill: #fff; }
.tray { margin-left: auto; display: flex; align-items: center; padding-right: 24px; }
.t2 { margin-left: 14px; }
.t3 { margin-left: 15px; }
.t4 { margin-left: 12px; }
.us { font-size: 15px; line-height: 20px; width: 17px; margin-left: 14px; }
.t5 { margin-left: 11px; }
.t6 { margin-left: 9px; }
.t7 { margin-left: 10px; }
.clock { width: 65px; margin: 0 14px 0 8px; display: flex; flex-direction: column; align-items: center; }
.clock b { font-weight: 400; font-size: 16.400px; line-height: 18px; white-space: nowrap; }
.clock span { font-size: 12.600px; line-height: 15px; padding-bottom: 2px; }
```
